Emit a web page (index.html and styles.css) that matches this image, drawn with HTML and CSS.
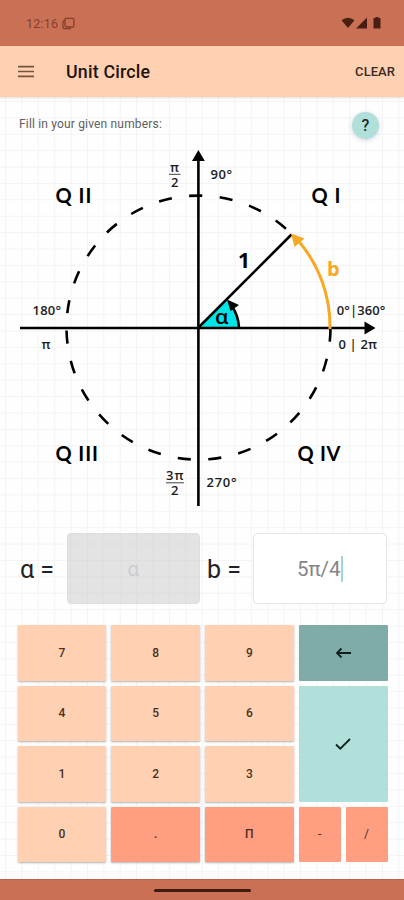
FILE: index.html
```html
<!DOCTYPE html>
<html lang="en">
<head>
<meta charset="utf-8">
<title>Unit Circle</title>
<link rel="stylesheet" href="styles.css">
</head>
<body>
<div class="screen">
  <header class="status">
    <span class="clock">12:16</span>
    <svg class="notif" width="13" height="13" viewBox="0 0 13 13"><path d="M3.4 1.4h7.2a1.3 1.3 0 0 1 1.3 1.3v6a1.3 1.3 0 0 1-1.3 1.3H4.4L3 8.8V2.4zM2.4 3C1 3.6.9 5 .9 6v4a1.6 1.6 0 0 0 1.6 1.6H9" fill="none" stroke="#873f2b" stroke-width="1.3"/></svg>
    <svg class="signals" width="42" height="14" viewBox="0 0 42 14" fill="#4b1e14"><path d="M1.5 4.2Q8 -.8 14.5 4.2L8 12z"/><path d="M16 12.5 27 1.5v11z"/><path d="M33.500 2h2V1h3v1h2v10.500h-7z"/></svg>
  </header>
  <div class="appbar">
    <svg width="18" height="14" viewBox="0 0 18 14"><path d="M1 1.700h16M1 6.500h16M1 11.300h16" stroke="#75543d" stroke-width="1.700"/></svg>
    <h1 class="title">Unit Circle</h1>
    <button class="clear">CLEAR</button>
  </div>
  <main class="content">
    <div class="hint">
      <span class="hint-text">Fill in your given numbers:</span>
      <button class="help">?</button>
    </div>
    <svg class="diagram" width="404" height="380" viewBox="0 140 404 380">
      <path d="M330.500 327.500A132 132 0 1 1 291.800 234.200" class="dashes"/>
      <path d="M198.500 327.500 227 299.500A40 40 0 0 1 239 327.500z" fill="#00e5e5"/>
      <path d="M239 327.500A41 41 0 0 0 231 305" class="axis"/>
      <path d="M227 299.500 239 305 230.500 311z"/>
      <path d="M20 328H366M198.400 506V158" class="axis"/>
      <path d="M364.500 321.500 375.500 328 364.500 334.500zM192 161 198.400 150 204.800 161z"/>
      <path d="M198.500 327.500 291.500 234.500" class="axis"/>
      <path d="M330 329A132 132 0 0 0 298.500 241" class="arc"/>
      <path d="M291 233.500 304.500 238.500 294.500 247z" fill="#f9a825"/>
      <g class="quad">
        <text x="55.500" y="203" textLength="36">Q II</text>
        <text x="311.500" y="203" textLength="29">Q I</text>
        <text x="55.500" y="461" textLength="42.500">Q III</text>
        <text x="297.500" y="461" textLength="43">Q IV</text>
      </g>
      <g class="mark">
        <text x="238" y="267.500" class="one">1</text>
        <text x="327" y="275.500" class="orange">b</text>
        <text x="215" y="324" textLength="13.500" lengthAdjust="spacingAndGlyphs">α</text>
      </g>
      <g class="deg">
        <text x="210.500" y="179" textLength="21.500">90°</text>
        <text x="32.500" y="315" textLength="28.500">180°</text>
        <text x="336.800" y="315" textLength="48.500">0°|360°</text>
        <text x="338.500" y="348.700" textLength="38.500">0 | 2π</text>
        <text x="206.500" y="487" textLength="30">270°</text>
        <text x="41.500" y="348.500">π</text>
        <text x="170" y="172.300">π</text>
        <text x="171" y="186.700">2</text>
        <text x="166" y="480" textLength="17.500">3π</text>
        <text x="171" y="494.500">2</text>
      </g>
      <path d="M169 174.300h11.500M166 482.800h18" stroke="#444" stroke-width="1"/>
    </svg>
    <div class="inputs">
      <span class="label label-a">α =</span>
      <div class="field disabled">α</div>
      <span class="label label-b">b =</span>
      <div class="field">5π/4<i class="caret"></i></div>
    </div>
    <div class="keypad">
      <button class="key">7</button><button class="key">8</button><button class="key">9</button>
      <button class="key back"><svg width="18" height="14" viewBox="0 0 18 14"><path d="M17 7H3M7.500 2.500 3 7l4.500 4.500" fill="none" stroke="#10201e" stroke-width="1.800"/></svg></button>
      <button class="key">4</button><button class="key">5</button><button class="key">6</button>
      <button class="key ok"><svg width="18" height="14" viewBox="0 0 18 14"><path d="M2 7.500 6.300 11.700 16 2" fill="none" stroke="#10201e" stroke-width="1.800"/></svg></button>
      <button class="key">1</button><button class="key">2</button><button class="key">3</button>
      <button class="key">0</button><button class="key op">.</button><button class="key op">Π</button>
      <div class="pair"><button class="key op flat">-</button><button class="key op flat">/</button></div>
    </div>
  </main>
  <footer class="nav"><span class="pill"></span></footer>
</div>
</body>
</html>
```
FILE: styles.css
```css
* { box-sizing: border-box; }
body { margin: 0; font-family: Roboto, sans-serif; }
button { border: 0; padding: 0; margin: 0; background: none; font-family: inherit; color: inherit; }
.screen { width: 404px; height: 900px; display: flex; flex-direction: column; overflow: hidden; }
.status { height: 46px; flex: none; background: #c97055; display: flex; align-items: center; padding: 0 22px 0 26px; }
.clock { font-size: 12.5px; letter-spacing: .2px; color: #873f2b; width: 36px; white-space: nowrap; }
.signals { margin-left: auto; }
.appbar { height: 51px; flex: none; background: #ffd0b1; display: flex; align-items: center; padding: 0 9px 0 17px; position: relative; box-shadow: 0 1px 2px rgba(0,0,0,.12); }
.title { margin: 0 0 0 31px; font-size: 17.8px; font-weight: 500; color: #20150e; letter-spacing: .2px; }
.clear { margin-left: auto; font-size: 13px; font-weight: 500; color: #3a2a20; letter-spacing: .05px; }
.content {
  flex: 1; display: flex; flex-direction: column;
  background-color: #fefefe;
  background-image: linear-gradient(to right, #f3f3f3 1px, transparent 1px), linear-gradient(to bottom, #f3f3f3 1px, transparent 1px);
  background-size: 16.4px 16.4px;
  background-position: 5px 4px;
}
.hint { height: 43px; flex: none; display: flex; justify-content: space-between; align-items: flex-start; padding: 15px 25px 0 19px; }
.hint-text { font-size: 12px; line-height: 25px; letter-spacing: .17px; color: #606060; }
.help { width: 27px; height: 27px; border-radius: 50%; background: #b1dfda; font-size: 16px; font-weight: 500; color: #182c2a; box-shadow: 0 1px 4px rgba(80,80,140,.25); }
.diagram { display: block; flex: none; font-family: "Open Sans", sans-serif; }
.axis { fill: none; stroke: #000; stroke-width: 2.6; }
.dashes { fill: none; stroke: #000; stroke-width: 2.6; stroke-dasharray: 13.1 17.47; stroke-dashoffset: -1; }
.arc { fill: none; stroke: #f9a825; stroke-width: 3; }
.quad { font-family: Lato, sans-serif; font-size: 20px; font-weight: 700; }
.mark { font-size: 20px; font-weight: 600; }
.one { font-size: 21px; font-weight: 700; }
.orange { fill: #f9a825; font-weight: 700; }
.deg { font-size: 13px; font-weight: 600; fill: #1c1c1c; }
.inputs { display: flex; align-items: center; height: 71px; flex: none; margin-top: 13px; padding: 0 17.5px 0 20px; }
.label { font-size: 25px; color: #222; white-space: nowrap; padding-top: 2px; }
.label-a { width: 46.5px; }
.label-b { width: 46px; margin-left: 7px; }
.field { width: 132px; height: 71px; flex: 1; border-radius: 4px; border: 1px solid #e6e6e6; background: #fff; display: flex; align-items: center; justify-content: center; font-size: 20.5px; color: #858585; padding-top: 1px; }
.disabled { background: rgba(200,200,200,.5); border-color: #dedede; color: #ccccd0; }
.caret { flex: none; width: 2px; height: 26px; background: #9ed8d1; }
.keypad { display: grid; grid-template-columns: repeat(4, 1fr); grid-template-rows: repeat(4, 55.5px); gap: 5px; margin: 21px 16.5px 0 17.5px; }
.key { display: flex; align-items: center; justify-content: center; background: #ffd0b1; border-radius: 1px; font-size: 12px; font-weight: 500; color: #4a3022; box-shadow: 0 1px 2px rgba(0,0,0,.3); }
.back { background: #80aca7; box-shadow: none; }
.ok { background: #b1dfda; grid-row: 2 / 4; grid-column: 4; box-shadow: none; }
.op { background: #ff9e80; }
.flat { box-shadow: none; font-weight: 400; }
.pair { display: grid; grid-template-columns: 1fr 1fr; gap: 5px; }
.nav { height: 21px; flex: none; background: #c97055; border-top: 1px solid #bb6248; display: flex; justify-content: center; align-items: center; }
.pill { width: 97px; height: 3px; border-radius: 2px; background: #3f1b10; }
```
